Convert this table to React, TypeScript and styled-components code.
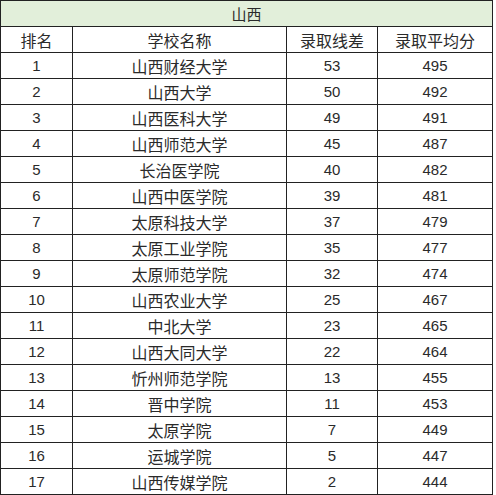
import React from "react";
import styled, { createGlobalStyle } from "styled-components";

const GlobalStyle = createGlobalStyle`
  html, body {
    margin: 0;
    padding: 0;
    background: #ffffff;
  }
`;

const cjk = `"Noto Sans CJK SC", "Noto Sans CJK JP", "Noto Sans CJK TC", sans-serif`;

const Table = styled.table`
  border-collapse: collapse;
  table-layout: fixed;
  width: 492px;
  font-family: ${cjk};
  color: #2a2a2a;
`;

const Col = styled.col<{ w: number }>`
  width: ${(p) => p.w}px;
`;

const Row = styled.tr`
  height: 26px;
`;

const TitleCell = styled.td`
  background-color: #e2efda;
  border: 1px solid #222;
  text-align: center;
  font-size: 15px;
  line-height: 24px;
  padding: 0;
`;

const HeadCell = styled.td`
  border: 1px solid #222;
  text-align: center;
  font-size: 16px;
  line-height: 24px;
  padding: 0;
`;

const Cell = styled.td<{ num?: boolean }>`
  border: 1px solid #222;
  text-align: center;
  padding: 0;
  font-size: ${(p) => (p.num ? "15px" : "16px")};
  line-height: 24px;
  font-family: ${(p) => (p.num ? `"Liberation Sans", sans-serif` : cjk)};
  -webkit-font-smoothing: antialiased;
`;

const rows: [number, string, number, number][] = [
  [1, "山西财经大学", 53, 495],
  [2, "山西大学", 50, 492],
  [3, "山西医科大学", 49, 491],
  [4, "山西师范大学", 45, 487],
  [5, "长治医学院", 40, 482],
  [6, "山西中医学院", 39, 481],
  [7, "太原科技大学", 37, 479],
  [8, "太原工业学院", 35, 477],
  [9, "太原师范学院", 32, 474],
  [10, "山西农业大学", 25, 467],
  [11, "中北大学", 23, 465],
  [12, "山西大同大学", 22, 464],
  [13, "忻州师范学院", 13, 455],
  [14, "晋中学院", 11, 453],
  [15, "太原学院", 7, 449],
  [16, "运城学院", 5, 447],
  [17, "山西传媒学院", 2, 444],
];

export default function App() {
  return (
    <>
      <GlobalStyle />
      <Table>
        <colgroup>
          <Col w={72} />
          <Col w={214} />
          <Col w={91} />
          <Col w={115} />
        </colgroup>
        <tbody>
          <Row>
            <TitleCell colSpan={4}>山西</TitleCell>
          </Row>
          <Row>
            <HeadCell>排名</HeadCell>
            <HeadCell>学校名称</HeadCell>
            <HeadCell>录取线差</HeadCell>
            <HeadCell>录取平均分</HeadCell>
          </Row>
          {rows.map(([rank, name, diff, avg]) => (
            <Row key={rank}>
              <Cell num>{rank}</Cell>
              <Cell>{name}</Cell>
              <Cell num>{diff}</Cell>
              <Cell num>{avg}</Cell>
            </Row>
          ))}
        </tbody>
      </Table>
    </>
  );
}
